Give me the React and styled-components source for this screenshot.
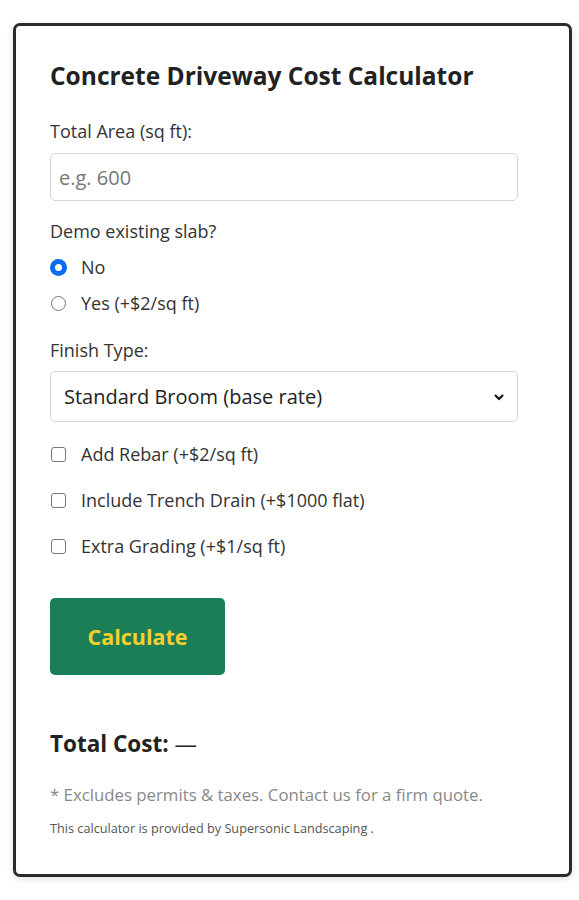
import React, { useState } from 'react'
import styled, { createGlobalStyle } from 'styled-components'

const GlobalStyle = createGlobalStyle`
  html, body {
    margin: 0;
    padding: 0;
    background: #ffffff;
  }

  body {
    font-family: 'Open Sans', 'Liberation Sans', sans-serif;
    color: #222;
  }
`

const Page = styled.div`
  padding: 23px 7px 22px 13px;
`

const Card = styled.div`
  box-sizing: border-box;
  width: 559px;
  height: 854px;
  border: 3px solid #2b2b2b;
  border-radius: 7px;
  box-shadow: 0 2px 6px rgba(0, 0, 0, 0.12);
  padding: 32px 51px 0 34px;
  background: #fff;
`

const Title = styled.h2`
  margin: 0 0 26px;
  font-size: 24.5px;
  line-height: 36px;
  font-weight: 700;
  color: #222;
`

const Label = styled.div`
  font-size: 18px;
  line-height: 22px;
  color: #333;
  margin-bottom: ${({ gap }) => gap || 11}px;
`

const Input = styled.input`
  display: block;
  box-sizing: border-box;
  width: 100%;
  height: 48px;
  border: 1px solid #d6d6d6;
  border-radius: 5px;
  padding: 0 8px;
  font-family: inherit;
  font-size: 20px;
  color: #222;
  margin-bottom: 19px;

  &::placeholder {
    color: #777;
  }
`

const Options = styled.div`
  display: flex;
  flex-direction: column;
  gap: ${({ gap }) => gap}px;
  margin-bottom: ${({ after }) => after}px;
`

const Option = styled.label`
  display: flex;
  align-items: center;
  gap: 15px;
  font-size: 18px;
  line-height: 22px;
  color: #333;
`

const Radio = styled.span`
  box-sizing: border-box;
  width: 15px;
  height: 15px;
  margin-left: 1px;
  border-radius: 50%;
  border: ${({ checked }) => (checked ? '4px solid #0b6cf0' : '1px solid #777')};
  background: #fff;
  box-shadow: ${({ checked }) => (checked ? '0 0 0 1px #0b6cf0' : 'none')};
`

const Box = styled.span`
  box-sizing: border-box;
  width: 15px;
  height: 15px;
  margin-left: 1px;
  border: 1px solid #777;
  border-radius: 3px;
  background: #fff;
`

const SelectWrap = styled.div`
  position: relative;
  margin-bottom: 21px;
`

const Select = styled.div`
  box-sizing: border-box;
  height: 51px;
  border: 1px solid #d6d6d6;
  border-radius: 5px;
  padding: 0 12px 0 13px;
  display: flex;
  align-items: center;
  justify-content: space-between;
  font-size: 20px;
  color: #222;
`

const Chevron = styled.svg`
  width: 12px;
  height: 12px;
`

const CalcButton = styled.button`
  display: block;
  width: 175px;
  height: 77px;
  border: none;
  border-radius: 5px;
  background: #1a7f56;
  color: #f5cf2f;
  font-family: inherit;
  font-size: 21.5px;
  font-weight: 700;
  margin-top: 41px;
  margin-bottom: 54px;
  cursor: pointer;
`

const Total = styled.div`
  font-size: 22.5px;
  line-height: 30px;
  font-weight: 700;
  color: #222;
  margin-bottom: 25px;

  span {
    font-weight: 400;
  }
`

const Note = styled.p`
  margin: 0 0 13px;
  font-size: 16.8px;
  line-height: 22px;
  color: #888;
`

const Credit = styled.p`
  margin: 0;
  font-size: 12.7px;
  line-height: 18px;
  color: #555;
`

export default function App() {
  const [demo, setDemo] = useState('no')

  return (
    <Page>
      <GlobalStyle />
      <Card>
        <Title>Concrete Driveway Cost Calculator</Title>

        <Label>Total Area (sq ft):</Label>
        <Input placeholder="e.g. 600" />

        <Label gap={14}>Demo existing slab?</Label>
        <Options gap={14} after={25}>
          <Option onClick={() => setDemo('no')}>
            <Radio checked={demo === 'no'} />
            No
          </Option>
          <Option onClick={() => setDemo('yes')}>
            <Radio checked={demo === 'yes'} />
            Yes (+$2/sq ft)
          </Option>
        </Options>

        <Label gap={10}>Finish Type:</Label>
        <SelectWrap>
          <Select>
            Standard Broom (base rate)
            <Chevron viewBox="0 0 12 12">
              <path d="M2 4 L6 8 L10 4" fill="none" stroke="#111" strokeWidth="2.2" />
            </Chevron>
          </Select>
        </SelectWrap>

        <Options gap={24} after={0}>
          <Option>
            <Box />
            Add Rebar (+$2/sq ft)
          </Option>
          <Option>
            <Box />
            Include Trench Drain (+$1000 flat)
          </Option>
          <Option>
            <Box />
            Extra Grading (+$1/sq ft)
          </Option>
        </Options>

        <CalcButton>Calculate</CalcButton>

        <Total>
          Total Cost: <span>—</span>
        </Total>

        <Note>* Excludes permits &amp; taxes. Contact us for a firm quote.</Note>
        <Credit>This calculator is provided by Supersonic Landscaping .</Credit>
      </Card>
    </Page>
  )
}
